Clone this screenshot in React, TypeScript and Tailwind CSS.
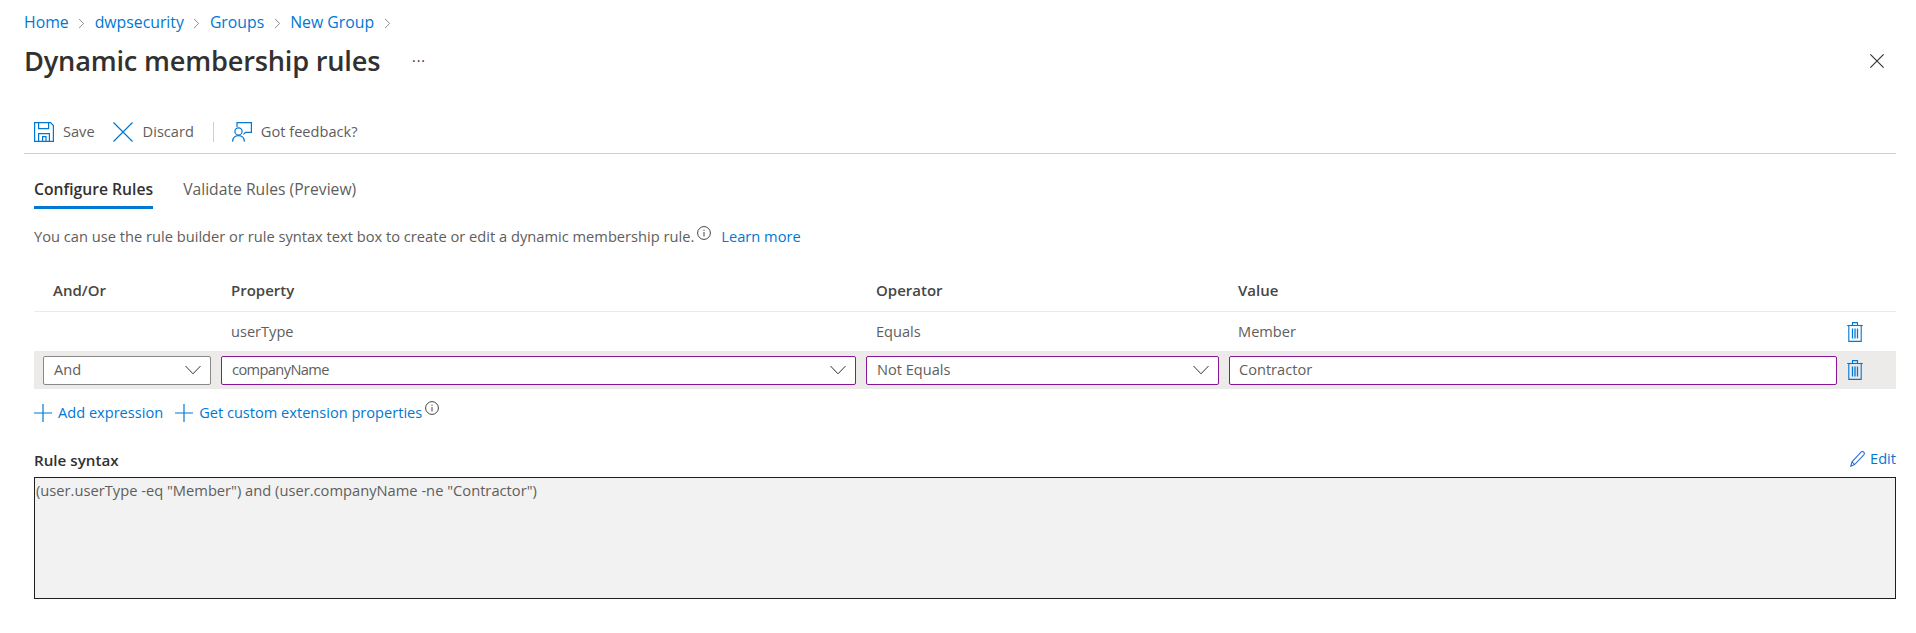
import React from 'react';
import {ChevronRight} from 'lucide-react';

const SaveIcon = () => (
    <svg width="20" height="20" viewBox="0 0 20 20" fill="none" stroke="#0078d4" strokeWidth="1.2">
        <path d="M.6.6H16.5L19.4 3.5V19.4H.6Z"/>
        <path d="M4.6.6V6.6H14.6V.6"/>
        <path d="M4.6 19.4V11.6H15.4V19.4"/>
        <path d="M8.6 19.4V14.6H12V19.4"/>
    </svg>
);

const CrossIcon = ({size, color}: {size: number; color: string}) => (
    <svg width={size} height={size} viewBox="0 0 20 20" fill="none" stroke={color} strokeWidth={size > 16 ? 1.2 : 1.6}>
        <path d="M.5.5L19.5 19.5M19.5.5L.5 19.5"/>
    </svg>
);

const FeedbackIcon = () => (
    <svg width="20" height="20" viewBox="0 0 20 20" fill="none" stroke="#0078d4" strokeWidth="1.2">
        <path d="M5 5V.6H19.4V10.4H13.6L11.4 12.4"/>
        <circle cx="6.5" cy="9.4" r="3.6"/>
        <path d="M.6 19.6C.8 15.6 3.2 13.6 6.5 13.6C9.8 13.6 12.2 15.6 12.4 19.6"/>
    </svg>
);

const TrashIcon = () => (
    <svg width="16" height="20" viewBox="0 0 16 20" fill="none" stroke="#0078d4" strokeWidth="1.1">
        <path d="M.2 3.5H15.8"/>
        <path d="M5.5 3.5V.6H10.5V3.5"/>
        <path d="M1.8 3.5V19.4H14.2V3.5"/>
        <path d="M5.5 6.5V16.5M8 6.5V16.5M10.5 6.5V16.5" strokeWidth="1.3"/>
    </svg>
);

const PencilIcon = () => (
    <svg width="15" height="16" viewBox="0 0 15 16" fill="none" stroke="#2f6fdc" strokeWidth="1.1">
        <path d="M.8 15.2L2 10.8L11 1.2C11.8.4 13 .4 13.8 1.2C14.5 2 14.5 3 13.8 3.8L4.6 13.6Z"/>
        <path d="M2 10.8L4.6 13.6"/>
    </svg>
);

const PlusIcon = () => (
    <svg width="18" height="18" viewBox="0 0 18 18" fill="none" stroke="#0078d4" strokeWidth="1.2">
        <path d="M9 0V18M0 9H18"/>
    </svg>
);

const InfoIcon = () => (
    <svg width="14" height="14" viewBox="0 0 14 14" fill="none" stroke="#323130" strokeWidth="0.9">
        <circle cx="7" cy="7" r="6.4"/>
        <path d="M7 6V10.5M7 3.6V4.8"/>
    </svg>
);

const Chevron = () => (
    <svg width="16" height="10" viewBox="0 0 16 10" fill="none" stroke="#323130" strokeWidth="1">
        <path d="M.5 1L8 8.8L15.5 1"/>
    </svg>
);

const SelectBox = ({label, purple = true, tight = false}: {label: string; purple?: boolean; tight?: boolean}) => (
    <div className={`flex h-[29px] items-center justify-between rounded-[2px] border bg-white pl-[10px] pr-[9px] ${purple ? 'border-[#881798]' : 'border-[#8a8886]'}`}>
        <span className={tight ? 'tracking-[-0.6px]' : ''}>{label}</span>
        <Chevron/>
    </div>
);

const gridCols = 'grid grid-cols-[168px_635px_353px_608px_auto] gap-x-[10px] pl-[9px]';

export default function App() {
    return (
        <div className="h-[633px] bg-white pl-[24px] pr-[20px] text-[14.6px] text-[#323130]"
             style={{fontFamily: '"Open Sans", "Noto Sans", sans-serif'}}>
            <div className="h-[11px]"/>
            <nav className="flex h-[24px] items-center text-[15.8px] text-[#0078d4]">
                {['Home', 'dwpsecurity', 'Groups', 'New Group'].map(crumb => (
                    <React.Fragment key={crumb}>
                        <span>{crumb}</span>
                        <ChevronRight size={17} strokeWidth={1} color="#605e5c" className="mx-[4.5px]"/>
                    </React.Fragment>
                ))}
            </nav>
            <div className="flex h-[52px] items-center">
                <h1 className="w-[388px] text-[27.2px] font-semibold tracking-[-0.2px]">Dynamic membership rules</h1>
                <span className="text-[14px] leading-none tracking-[1px]">···</span>
                <div className="ml-auto mr-[12px]"><CrossIcon size={14} color="#323130"/></div>
            </div>

            <div className="mt-[23px] flex h-[44px] items-center border-b border-[#d2d0ce] pl-[10px] text-[14.6px] text-[#605e5c]">
                <SaveIcon/>
                <span className="ml-[9px]">Save</span>
                <div className="ml-[18px]"><CrossIcon size={20} color="#0078d4"/></div>
                <span className="ml-[10px]">Discard</span>
                <div className="ml-[19px] h-[20px] w-px bg-[#d2d0ce]"/>
                <div className="ml-[18px]"><FeedbackIcon/></div>
                <span className="ml-[9px]">Got feedback?</span>
            </div>

            <div className="pl-[10px] pt-[24px]">
                <div className="flex gap-x-[30px] text-[15.7px]">
                    <div className="h-[31px] border-b-[3px] border-[#0078d4] font-semibold">Configure Rules</div>
                    <div className="text-[#605e5c]">Validate Rules (Preview)</div>
                </div>
                <div className="mt-[15px] flex h-[24px] items-center text-[14.67px] text-[#605e5c]">
                    <span>You can use the rule builder or rule syntax text box to create or edit a dynamic membership rule.</span>
                    <div className="ml-[3px] -translate-y-[3px]"><InfoIcon/></div>
                    <span className="ml-[10px] text-[#0078d4]">Learn more</span>
                </div>
            </div>

            <div className="ml-[10px] mt-[21px]">
                <div className={`${gridCols} h-[43px] items-center border-b border-[#edebe9] text-[15px] font-semibold text-[#484644]`}>
                    <div className="pl-[10px]">And/Or</div>
                    <div className="pl-[10px]">Property</div>
                    <div className="pl-[10px]">Operator</div>
                    <div className="pl-[9px]">Value</div>
                </div>
                <div className={`${gridCols} h-[39px] items-center text-[#605e5c]`}>
                    <div/>
                    <div className="pl-[10px]">userType</div>
                    <div className="pl-[10px]">Equals</div>
                    <div className="pl-[9px]">Member</div>
                    <TrashIcon/>
                </div>
                <div className={`${gridCols} h-[38px] items-center bg-[#edebe9] text-[#605e5c]`}>
                    <SelectBox label="And" purple={false}/>
                    <SelectBox label="companyName" tight/>
                    <SelectBox label="Not Equals"/>
                    <div className="flex h-[29px] items-center rounded-[2px] border border-[#881798] bg-white pb-px pl-[9px]">Contractor</div>
                    <TrashIcon/>
                </div>
            </div>

            <div className="ml-[10px] mt-[13px] flex h-[22px] items-center text-[#0078d4]">
                <PlusIcon/>
                <span className="ml-[6px]">Add expression</span>
                <div className="ml-[12px]"><PlusIcon/></div>
                <span className="ml-[6px]">Get custom extension properties</span>
                <div className="ml-[3px] -translate-y-[5px]"><InfoIcon/></div>
            </div>

            <div className="ml-[10px] mt-[19px] flex h-[34px] items-start justify-between">
                <span className="mt-[7px] text-[15.2px] font-semibold leading-[20px]">Rule syntax</span>
                <div className="mt-[5px] flex items-center gap-x-[5px] text-[#0078d4]">
                    <PencilIcon/>
                    <span>Edit</span>
                </div>
            </div>
            <div className="ml-[10px] h-[122px] border border-[#201f1e] bg-[#f2f2f2] pl-px pt-px text-[14.7px] text-[#605e5c]">
                (user.userType -eq "Member") and (user.companyName -ne "Contractor")
            </div>
        </div>
    );
}
